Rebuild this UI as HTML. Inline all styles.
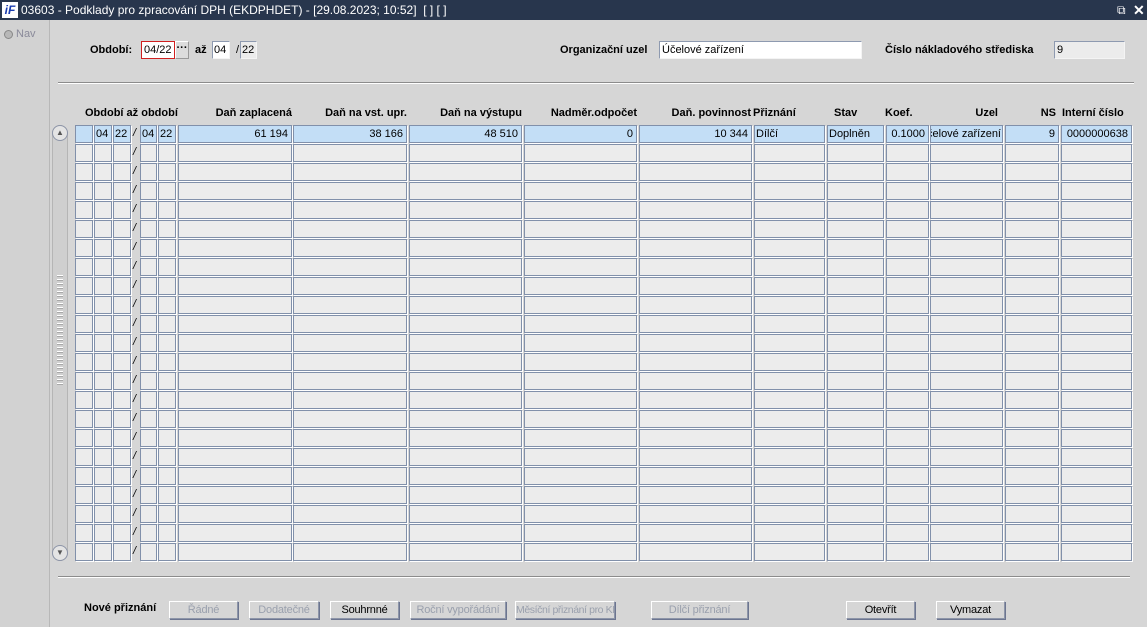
<!DOCTYPE html>
<html><head><meta charset="utf-8"><style>
*{margin:0;padding:0;box-sizing:border-box}
body{width:1147px;height:627px;background:#d6d6d6;font-family:"Liberation Sans",Tahoma,sans-serif;font-size:11px;color:#000;position:relative;overflow:hidden}
.a{position:absolute}
.tb{left:0;top:0;width:1147px;height:20px;background:#28364d;color:#fff;font-size:12px;line-height:20px}
.nav{left:0;top:20px;width:50px;height:607px;background:#d2d2d2;border-right:1px solid #b8b8b8}
.b{font-weight:bold}
.in{position:absolute;height:18px;background:#fff;border:1px solid #8e9ab0;border-right-color:#f4f4f4;border-bottom-color:#f4f4f4;padding:1px 2px;line-height:14px}
.r{position:absolute;left:0;width:1147px;height:18px}
.r i{position:absolute;top:0;height:18px;background:#ececec;border:1px solid #8190aa;box-shadow:1px 1px 0 #fff;font-style:normal;line-height:16px;padding:0 3px;white-space:nowrap;overflow:hidden}
.r b{position:absolute;left:133px;top:2px;font-weight:normal;font-style:italic}
.r i:nth-of-type(1){left:75px;width:18px}
.r i:nth-of-type(2){left:94px;width:18px}
.r i:nth-of-type(3){left:113px;width:18px}
.r i:nth-of-type(4){left:140px;width:17px}
.r i:nth-of-type(5){left:158px;width:18px}
.r i:nth-of-type(6){left:178px;width:114px;text-align:right}
.r i:nth-of-type(7){left:293px;width:114px;text-align:right}
.r i:nth-of-type(8){left:409px;width:113px;text-align:right}
.r i:nth-of-type(9){left:524px;width:113px;text-align:right}
.r i:nth-of-type(10){left:639px;width:113px;text-align:right}
.r i:nth-of-type(11){left:754px;width:71px}
.r i:nth-of-type(12){left:827px;width:57px}
.r i:nth-of-type(13){left:886px;width:43px;text-align:right}
.r i:nth-of-type(14){left:930px;width:73px;text-align:right}
.r i:nth-of-type(15){left:1005px;width:54px;text-align:right}
.r i:nth-of-type(16){left:1061px;width:71px;text-align:right}
.r.s i{background:#c3def6}
.r i:nth-of-type(2),.r i:nth-of-type(3),.r i:nth-of-type(4),.r i:nth-of-type(5){padding:0 1px}
.h{position:absolute;top:107px;font-weight:bold;white-space:nowrap}
.btn{position:absolute;top:601px;height:18px;border:1px solid #8d95a8;border-top-color:#fff;border-left-color:#fff;box-shadow:1px 1px 0 #6c7590;text-align:center;line-height:16px;color:#9aa0ad;background:#d6d6d6;white-space:nowrap;overflow:hidden;letter-spacing:-0.2px}
.btn.e{color:#000}
.hr{position:absolute;height:1px;background:#8c8c8c;border-bottom:1px solid #fff;height:2px}
</style></head><body>
<div class="a tb"><span style="position:absolute;left:2px;top:2px;width:16px;height:16px;background:#fff;color:#1a3cb0;font-weight:bold;font-style:italic;font-size:12px;line-height:16px;text-align:center">iF</span><span style="position:absolute;left:21px">03603 - Podklady pro zpracování DPH (EKDPHDET) - [29.08.2023; 10:52]&nbsp; [ ] [ ]</span><span style="position:absolute;left:1117px;top:0;font-size:12px">⧉</span><span style="position:absolute;left:1133px;font-size:14px;font-weight:bold">✕</span></div>
<div class="a nav"><span style="position:absolute;left:4px;top:10px;width:9px;height:9px;border-radius:50%;background:#b8b8b8;border:1px solid #888"></span><span style="position:absolute;left:16px;top:8px;color:#8a8a9a">Nav</span></div>

<div class="a b" style="left:90px;top:44px">Období:</div>
<div class="in" style="left:141px;top:41px;width:34px;border:1px solid #d02020">04/22</div>
<div class="a" style="left:175px;top:41px;width:14px;height:18px;background:#dcdcdc;border:1px solid #fff;border-right-color:#999;border-bottom-color:#999;font-weight:bold;text-align:center;line-height:12px">···</div>
<div class="a b" style="left:195px;top:44px">až</div>
<div class="in" style="left:212px;top:41px;width:18px;padding:1px 1px">04</div>
<div class="a" style="left:236px;top:44px">/</div>
<div class="in" style="left:240px;top:41px;width:17px;padding:1px 1px;background:#ececec">22</div>
<div class="a b" style="left:560px;top:44px">Organizační uzel</div>
<div class="in" style="left:659px;top:41px;width:203px">Účelové zařízení</div>
<div class="a b" style="left:885px;top:44px">Číslo nákladového střediska</div>
<div class="in" style="left:1054px;top:41px;width:71px;background:#ececec">9</div>

<div class="hr" style="left:58px;top:82px;width:1076px"></div>

<div class="h" style="left:85px">Období až období</div>
<div class="h" style="left:178px;width:114px;text-align:right">Daň zaplacená</div>
<div class="h" style="left:293px;width:114px;text-align:right">Daň na vst. upr.</div>
<div class="h" style="left:409px;width:113px;text-align:right">Daň na výstupu</div>
<div class="h" style="left:524px;width:113px;text-align:right">Nadměr.odpočet</div>
<div class="h" style="left:639px;width:112px;text-align:right">Daň. povinnost</div>
<div class="h" style="left:753px">Přiznání</div>
<div class="h" style="left:834px">Stav</div>
<div class="h" style="left:885px">Koef.</div>
<div class="h" style="left:930px;width:68px;text-align:right">Uzel</div>
<div class="h" style="left:1005px;width:51px;text-align:right">NS</div>
<div class="h" style="left:1062px">Interní číslo</div>

<div class="a" style="left:52px;top:125px;width:16px;height:436px;background:#cfcfcf;border:1px solid #b5b5b5;border-radius:8px"></div>
<div class="a" style="left:52px;top:125px;width:16px;height:16px;border:1px solid #8d95a8;border-radius:8px;background:#e4e4e4;text-align:center;font-size:8px;line-height:13px;color:#555">▲</div>
<div class="a" style="left:52px;top:545px;width:16px;height:16px;border:1px solid #8d95a8;border-radius:8px;background:#e4e4e4;text-align:center;font-size:8px;line-height:14px;color:#555">▼</div>
<div class="a" style="left:57px;top:275px;width:6px;height:110px;background:repeating-linear-gradient(#fff 0 1px,#a8a8a8 1px 2px,transparent 2px 4px)"></div>

<div class="r s" style="top:125px"><i></i><i>04</i><i>22</i><b>/</b><i>04</i><i>22</i><i>61 194</i><i>38 166</i><i>48 510</i><i>0</i><i>10 344</i><i style="padding:0 1px">Dílčí</i><i style="padding:0 1px">Doplněn</i><i>0.1000</i><i style="direction:rtl;text-align:left;padding:0 1px">Účelové zařízení</i><i>9</i><i>0000000638</i></div>
<div class="r" style="top:144px"><i></i><i></i><i></i><b>/</b><i></i><i></i><i></i><i></i><i></i><i></i><i></i><i></i><i></i><i></i><i></i><i></i><i></i></div>
<div class="r" style="top:163px"><i></i><i></i><i></i><b>/</b><i></i><i></i><i></i><i></i><i></i><i></i><i></i><i></i><i></i><i></i><i></i><i></i><i></i></div>
<div class="r" style="top:182px"><i></i><i></i><i></i><b>/</b><i></i><i></i><i></i><i></i><i></i><i></i><i></i><i></i><i></i><i></i><i></i><i></i><i></i></div>
<div class="r" style="top:201px"><i></i><i></i><i></i><b>/</b><i></i><i></i><i></i><i></i><i></i><i></i><i></i><i></i><i></i><i></i><i></i><i></i><i></i></div>
<div class="r" style="top:220px"><i></i><i></i><i></i><b>/</b><i></i><i></i><i></i><i></i><i></i><i></i><i></i><i></i><i></i><i></i><i></i><i></i><i></i></div>
<div class="r" style="top:239px"><i></i><i></i><i></i><b>/</b><i></i><i></i><i></i><i></i><i></i><i></i><i></i><i></i><i></i><i></i><i></i><i></i><i></i></div>
<div class="r" style="top:258px"><i></i><i></i><i></i><b>/</b><i></i><i></i><i></i><i></i><i></i><i></i><i></i><i></i><i></i><i></i><i></i><i></i><i></i></div>
<div class="r" style="top:277px"><i></i><i></i><i></i><b>/</b><i></i><i></i><i></i><i></i><i></i><i></i><i></i><i></i><i></i><i></i><i></i><i></i><i></i></div>
<div class="r" style="top:296px"><i></i><i></i><i></i><b>/</b><i></i><i></i><i></i><i></i><i></i><i></i><i></i><i></i><i></i><i></i><i></i><i></i><i></i></div>
<div class="r" style="top:315px"><i></i><i></i><i></i><b>/</b><i></i><i></i><i></i><i></i><i></i><i></i><i></i><i></i><i></i><i></i><i></i><i></i><i></i></div>
<div class="r" style="top:334px"><i></i><i></i><i></i><b>/</b><i></i><i></i><i></i><i></i><i></i><i></i><i></i><i></i><i></i><i></i><i></i><i></i><i></i></div>
<div class="r" style="top:353px"><i></i><i></i><i></i><b>/</b><i></i><i></i><i></i><i></i><i></i><i></i><i></i><i></i><i></i><i></i><i></i><i></i><i></i></div>
<div class="r" style="top:372px"><i></i><i></i><i></i><b>/</b><i></i><i></i><i></i><i></i><i></i><i></i><i></i><i></i><i></i><i></i><i></i><i></i><i></i></div>
<div class="r" style="top:391px"><i></i><i></i><i></i><b>/</b><i></i><i></i><i></i><i></i><i></i><i></i><i></i><i></i><i></i><i></i><i></i><i></i><i></i></div>
<div class="r" style="top:410px"><i></i><i></i><i></i><b>/</b><i></i><i></i><i></i><i></i><i></i><i></i><i></i><i></i><i></i><i></i><i></i><i></i><i></i></div>
<div class="r" style="top:429px"><i></i><i></i><i></i><b>/</b><i></i><i></i><i></i><i></i><i></i><i></i><i></i><i></i><i></i><i></i><i></i><i></i><i></i></div>
<div class="r" style="top:448px"><i></i><i></i><i></i><b>/</b><i></i><i></i><i></i><i></i><i></i><i></i><i></i><i></i><i></i><i></i><i></i><i></i><i></i></div>
<div class="r" style="top:467px"><i></i><i></i><i></i><b>/</b><i></i><i></i><i></i><i></i><i></i><i></i><i></i><i></i><i></i><i></i><i></i><i></i><i></i></div>
<div class="r" style="top:486px"><i></i><i></i><i></i><b>/</b><i></i><i></i><i></i><i></i><i></i><i></i><i></i><i></i><i></i><i></i><i></i><i></i><i></i></div>
<div class="r" style="top:505px"><i></i><i></i><i></i><b>/</b><i></i><i></i><i></i><i></i><i></i><i></i><i></i><i></i><i></i><i></i><i></i><i></i><i></i></div>
<div class="r" style="top:524px"><i></i><i></i><i></i><b>/</b><i></i><i></i><i></i><i></i><i></i><i></i><i></i><i></i><i></i><i></i><i></i><i></i><i></i></div>
<div class="r" style="top:543px"><i></i><i></i><i></i><b>/</b><i></i><i></i><i></i><i></i><i></i><i></i><i></i><i></i><i></i><i></i><i></i><i></i><i></i></div>

<div class="hr" style="left:58px;top:576px;width:1072px"></div>

<div class="a b" style="left:84px;top:602px">Nové přiznání</div>
<div class="btn" style="left:169px;width:69px">Řádné</div>
<div class="btn" style="left:249px;width:70px">Dodatečné</div>
<div class="btn e" style="left:330px;width:69px">Souhrnné</div>
<div class="btn" style="left:410px;width:96px">Roční vypořádání</div>
<div class="btn" style="left:515px;width:100px;font-size:10.5px;letter-spacing:-0.4px">Měsíční přiznání pro KH</div>
<div class="btn" style="left:651px;width:97px">Dílčí přiznání</div>
<div class="btn e" style="left:846px;width:69px">Otevřít</div>
<div class="btn e" style="left:936px;width:69px">Vymazat</div>
</body></html>
